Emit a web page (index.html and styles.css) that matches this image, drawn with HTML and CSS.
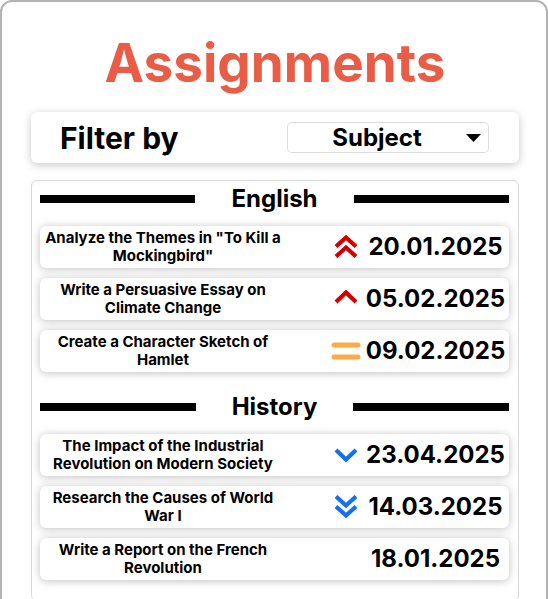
FILE: index.html
```html
<!DOCTYPE html>
<html lang="en">
<head>
<meta charset="utf-8">
<title>Assignments</title>
<link rel="stylesheet" href="styles.css">
</head>
<body>
<div class="page">
  <h1 class="title">Assignments</h1>

  <div class="filter">
    <span class="filter-label">Filter by</span>
    <div class="select">
      <span class="select-value">Subject</span>
      <svg class="select-caret" width="15" height="8" viewBox="0 0 15 8"><polygon points="0,0 15,0 7.5,8" fill="#000"/></svg>
    </div>
  </div>

  <div class="list">
    <section class="group">
      <div class="group-head"><span class="bar"></span><span class="group-name">English</span><span class="bar"></span></div>
      <div class="rows">
        <div class="row">
          <div class="row-title">Analyze the Themes in "To Kill a Mockingbird"</div>
          <div class="row-icon">
            <svg width="24" height="24" viewBox="0 0 24 24" class="red"><polyline points="2,11.5 12,2.5 22,11.5"/><polyline points="2,21.5 12,12.5 22,21.5"/></svg>
          </div>
          <div class="row-date">20.01.2025</div>
        </div>
        <div class="row">
          <div class="row-title">Write a Persuasive Essay on Climate Change</div>
          <div class="row-icon">
            <svg width="24" height="24" viewBox="0 0 24 24" class="red"><polyline points="2,15 12,5.5 22,15"/></svg>
          </div>
          <div class="row-date">05.02.2025</div>
        </div>
        <div class="row">
          <div class="row-title">Create a Character Sketch of Hamlet</div>
          <div class="row-icon">
            <svg width="30" height="24" viewBox="0 0 30 24"><rect x="0.5" y="3.5" width="29" height="5" rx="2.5" fill="#ffab45"/><rect x="0.5" y="15.5" width="29" height="5" rx="2.5" fill="#ffab45"/></svg>
          </div>
          <div class="row-date">09.02.2025</div>
        </div>
      </div>
    </section>

    <section class="group">
      <div class="group-head"><span class="bar"></span><span class="group-name">History</span><span class="bar"></span></div>
      <div class="rows">
        <div class="row">
          <div class="row-title">The Impact of the Industrial Revolution on Modern Society</div>
          <div class="row-icon">
            <svg width="24" height="24" viewBox="0 0 24 24" class="blue"><polyline points="2,7 12,16.5 22,7"/></svg>
          </div>
          <div class="row-date">23.04.2025</div>
        </div>
        <div class="row">
          <div class="row-title">Research the Causes of World War I</div>
          <div class="row-icon">
            <svg width="24" height="24" viewBox="0 0 24 24" class="blue"><polyline points="2,1.5 12,10.5 22,1.5"/><polyline points="2,11.5 12,20.5 22,11.5"/></svg>
          </div>
          <div class="row-date">14.03.2025</div>
        </div>
        <div class="row">
          <div class="row-title">Write a Report on the French Revolution</div>
          <div class="row-icon"></div>
          <div class="row-date">18.01.2025</div>
        </div>
      </div>
    </section>
  </div>
</div>
</body>
</html>
```

FILE: styles.css
```css
html, body {
  margin: 0;
  padding: 0;
  background: #ffffff;
}

body {
  font-family: "Inter", "Liberation Sans", sans-serif;
  font-weight: 700;
  color: #000;
  overflow: hidden;
}

.page {
  box-sizing: border-box;
  width: 548px;
  min-height: 720px;
  border: 2px solid #b3b3b3;
  border-radius: 12px;
  padding: 29px 27px 0 29px;
  background: #fff;
}

.title {
  margin: 0;
  text-align: center;
  font-size: 53px;
  line-height: 65px;
  font-weight: 700;
  color: #e95c45;
}

.filter {
  margin-top: 16px;
  height: 51px;
  border-radius: 6px;
  background: #fff;
  box-shadow: 0 2px 9px rgba(0, 0, 0, 0.22);
  display: flex;
  align-items: center;
  padding: 0 30px 0 29px;
}

.filter-label {
  font-size: 30px;
  flex: 1;
}

.select {
  width: 202px;
  height: 31px;
  box-sizing: border-box;
  border: 1px solid #dcdcdc;
  border-radius: 5px;
  display: flex;
  align-items: center;
  padding-right: 7px;
}

.select-value {
  flex: 1;
  text-align: center;
  font-size: 24px;
}

.select-caret {
  display: block;
}

.list {
  margin-top: 17px;
  border: 1px solid #d9d9d9;
  border-radius: 6px;
  padding: 4px 9px 20px 8px;
  display: flex;
  flex-direction: column;
  gap: 21px;
}

.group-head {
  display: grid;
  grid-template-columns: 1fr auto 1fr;
  align-items: center;
  column-gap: 36px;
  height: 28px;
}

.bar {
  display: block;
  height: 8px;
  background: #000;
}

.group-name {
  font-size: 24px;
  line-height: 28px;
}

.rows {
  margin-top: 13px;
  display: flex;
  flex-direction: column;
  gap: 10px;
}

.row {
  height: 42px;
  border-radius: 6px;
  background: #fff;
  box-shadow: 0 1px 8px rgba(0, 0, 0, 0.25);
  display: grid;
  grid-template-columns: 246px 1fr 30px 142px;
  align-items: center;
  padding-right: 3px;
}

.row-title {
  font-size: 15px;
  line-height: 18px;
  text-align: center;
}

.row-icon {
  grid-column: 3;
  display: flex;
  justify-content: center;
  align-items: center;
  width: 30px;
  margin-left: -3px;
}

.row-icon svg {
  display: block;
}

.red polyline,
.blue polyline {
  fill: none;
  stroke-width: 4.2;
  stroke-linecap: butt;
  stroke-linejoin: miter;
}

.red polyline {
  stroke: #d20000;
}

.blue polyline {
  stroke: #1470ee;
}

.row-date {
  grid-column: 4;
  text-align: center;
  font-size: 24px;
  line-height: 28px;
  padding-left: 1px;
}
```
